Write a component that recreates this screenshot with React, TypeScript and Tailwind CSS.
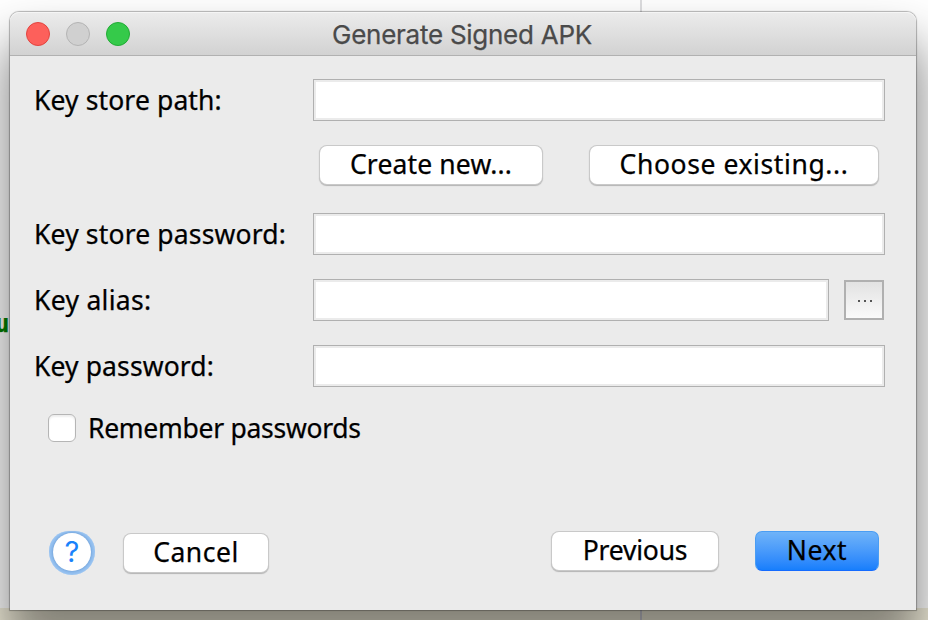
import type { ReactNode } from "react";

const BUTTON =
  "flex h-[38px] shrink-0 items-center justify-center rounded-[7px] bg-white shadow-[0_0_0_1px_#c9c9c9,0_1px_1px_1px_#b4b4b4] whitespace-nowrap";

function Label({ children, spacing }: { children: ReactNode; spacing: string }) {
  return <label className={`w-[279px] shrink-0 whitespace-nowrap ${spacing}`}>{children}</label>;
}

function Field({ width }: { width: string }) {
  return (
    <input
      className={`h-[42px] shrink-0 border border-[#b0b0b0] bg-white shadow-[inset_0_0_0_2px_#ebebeb] outline-none ${width}`}
    />
  );
}

export default function App() {
  return (
    <div className="relative h-[620px] w-[928px] overflow-hidden bg-white font-['Noto_Sans','Liberation_Sans',sans-serif] text-[26.5px] leading-[42px] text-black [-webkit-text-stroke:0.25px_currentColor]">
      <div className="absolute top-0 left-[640px] h-[620px] w-[2px] bg-[#dddddf]" />
      <div className="absolute bottom-0 left-0 h-[12px] w-full bg-[#f3efdc]" />
      <div className="absolute bottom-0 left-[640px] h-[12px] w-[2px] bg-[#cfcfd8]" />
      <span className="absolute top-[306px] left-[-5px] font-['DejaVu_Sans_Mono',monospace] text-[24px] leading-[36px] font-bold text-[#008000]">
        u
      </span>

      <main className="absolute top-[12px] left-[10px] flex h-[598px] w-[906px] flex-col rounded-t-[9px] bg-[#ebebeb] shadow-[0_0_1px_1px_rgba(0,0,0,0.28),0_36px_50px_6px_rgba(0,0,0,0.46)]">
        <header className="relative flex h-[44px] shrink-0 items-center rounded-t-[9px] border-b border-[#b1b1b1] bg-linear-to-b from-[#ececec] to-[#d2d2d2] px-4 shadow-[inset_0_1px_0_#f5f5f5]">
          <div className="flex gap-4">
            <span className="size-6 rounded-full border border-[#e2443f] bg-[#fd605b]" />
            <span className="size-6 rounded-full border border-[#b4b4b4] bg-[#d0d0d0]" />
            <span className="size-6 rounded-full border border-[#22ab35] bg-[#35ca4a]" />
          </div>
          <h1 className="absolute top-0 left-0 w-[904px] text-center font-['Inter','Liberation_Sans',sans-serif] text-[26px] leading-[46px] tracking-[-0.26px] text-[#4a4a4a]">
            Generate Signed APK
          </h1>
        </header>

        <form className="flex flex-col pt-[23px] pl-[24px]">
          <div className="flex">
            <Label spacing="tracking-[0.12px]">Key store path:</Label>
            <Field width="w-[572px]" />
          </div>
          <div className="mt-[25px] flex gap-[48px] pl-[286px]">
            <button type="button" className={`${BUTTON} w-[222px]`}>
              <span className="mt-[-3px] tracking-[0.14px]">Create new...</span>
            </button>
            <button type="button" className={`${BUTTON} w-[288px]`}>
              <span className="mt-[-3px] tracking-[0.6px]">Choose existing...</span>
            </button>
          </div>
          <div className="mt-[29px] flex">
            <Label spacing="tracking-[0.16px]">Key store password:</Label>
            <Field width="w-[572px]" />
          </div>
          <div className="mt-[24px] flex items-center">
            <Label spacing="tracking-[0.3px]">Key alias:</Label>
            <Field width="w-[516px]" />
            <button
              type="button"
              aria-label="Browse"
              className="ml-[15px] flex size-[40px] items-center justify-center gap-[4px] border-2 border-[#b0b0b0] bg-linear-to-b from-[#e2e2e2] to-[#fafafa] pt-[2px] pl-[2px]"
            >
              <i className="size-[2px] bg-[#555]" />
              <i className="size-[2px] bg-[#555]" />
              <i className="size-[2px] bg-[#555]" />
            </button>
          </div>
          <div className="mt-[24px] flex">
            <Label spacing="tracking-[0.12px]">Key password:</Label>
            <Field width="w-[572px]" />
          </div>
          <label className="mt-[20px] flex items-center gap-[12px] pl-[14px]">
            <span className="size-[28px] rounded-[6px] border border-[#b5b5b5] bg-white shadow-[inset_0_2px_2px_#eeeeee]" />
            <span className="tracking-[-0.28px]">Remember passwords</span>
          </label>
        </form>

        <footer className="flex items-start pt-[82px] pl-[39px]">
          <button
            type="button"
            className="flex h-[44px] w-[46px] items-start justify-center rounded-[23px] rounded-t-[20px] bg-[#94c0f0] pt-[2px] shadow-[inset_0_0_2px_#a9cdf4]"
          >
            <span className="flex size-[38px] items-center justify-center rounded-full bg-white font-['Inter','Liberation_Sans',sans-serif] text-[29px] text-[#1a83fb] shadow-[0_0_3px_#5b8fca] [-webkit-text-stroke:0px]">
              ?
            </span>
          </button>
          <button type="button" className={`${BUTTON} mt-[3px] ml-[29px] w-[144px]`}>
            <span className="mt-[-3px] tracking-[0.5px]">Cancel</span>
          </button>
          <button type="button" className={`${BUTTON} mt-[1px] ml-[284px] w-[166px]`}>
            <span className="mt-[-3px] tracking-[-0.2px]">Previous</span>
          </button>
          <button
            type="button"
            className="ml-[37px] flex h-[40px] w-[124px] items-center justify-center rounded-[7px] border border-[#4a9df3] border-b-[#146bff] bg-linear-to-b from-[#6fb3f8] to-[#167efc]"
          >
            <span className="mt-[-3px] tracking-[0.6px]">Next</span>
          </button>
        </footer>
      </main>
    </div>
  );
}
